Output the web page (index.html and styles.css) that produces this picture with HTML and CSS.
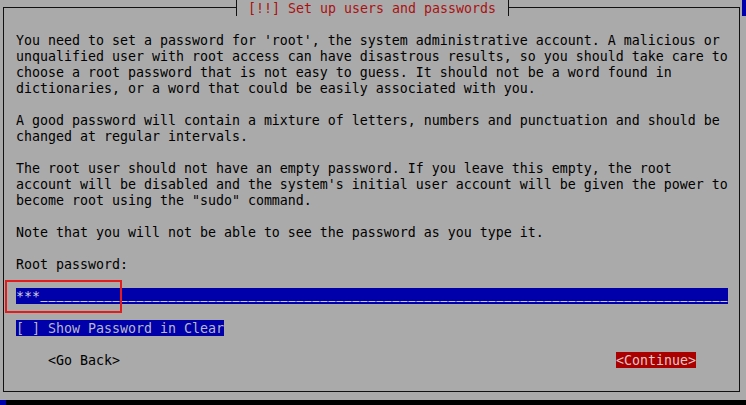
FILE: index.html
```html
<!DOCTYPE html>
<html>
<head>
<meta charset="utf-8">
<link rel="stylesheet" href="styles.css">
</head>
<body>
<div class="screen">
  <div class="main">
    <div class="dialog">
      <div class="title"><span class="title-text">[!!] Set up users and passwords</span></div>
      <div class="body">
        <div class="line">You need to set a password for 'root', the system administrative account. A malicious or</div>
        <div class="line">unqualified user with root access can have disastrous results, so you should take care to</div>
        <div class="line">choose a root password that is not easy to guess. It should not be a word found in</div>
        <div class="line">dictionaries, or a word that could be easily associated with you.</div>
        <div class="line"> </div>
        <div class="line">A good password will contain a mixture of letters, numbers and punctuation and should be</div>
        <div class="line">changed at regular intervals.</div>
        <div class="line"> </div>
        <div class="line">The root user should not have an empty password. If you leave this empty, the root</div>
        <div class="line">account will be disabled and the system's initial user account will be given the power to</div>
        <div class="line">become root using the "sudo" command.</div>
        <div class="line"> </div>
        <div class="line">Note that you will not be able to see the password as you type it.</div>
        <div class="line"> </div>
        <div class="line">Root password:</div>
        <div class="line"> </div>
        <div class="field"><span class="stars">***</span><span class="underline">______________________________________________________________________________________</span></div>
        <div class="line"> </div>
        <div class="line"><span class="check">[ ] Show Password in Clear</span></div>
        <div class="line"> </div>
        <div class="buttons">
          <span class="btn">&lt;Go Back&gt;</span>
          <span class="btn active">&lt;Continue&gt;</span>
        </div>
      </div>
      <div class="mark"></div>
    </div>
  </div>
  <div class="edge"><div class="edge-blue"></div></div>
</div>
<div class="bottom"><div class="bottom-blue"></div></div>
</body>
</html>
```

FILE: styles.css
```css
html, body {
  margin: 0;
  padding: 0;
}
body {
  width: 746px;
  height: 405px;
  overflow: hidden;
  background: #000;
  font-family: "DejaVu Sans Mono", "Liberation Mono", monospace;
  font-size: 13.29px;
  line-height: 16px;
  color: #000;
}
.screen {
  display: flex;
  height: 400px;
  background: #aaaaaa;
}
.main {
  width: 742px;
  padding-left: 3px;
  padding-top: 7px;
  box-sizing: border-box;
}
.dialog {
  position: relative;
  width: 737px;
  height: 385px;
  box-sizing: border-box;
  border: 1px solid #111;
  padding: 24px 11px 0 12px;
}
.title {
  position: absolute;
  left: 232px;
  top: -8px;
  width: 273px;
  height: 16px;
  box-sizing: border-box;
  border-left: 1px solid #111;
  border-right: 1px solid #111;
  background: #aaaaaa;
  color: #aa1010;
  padding-left: 11px;
  white-space: pre;
}
.title-text {
  display: inline-block;
  height: 16px;
  line-height: 18px;
  vertical-align: top;
}
.body {
  width: 712px;
}
.line {
  height: 16px;
  line-height: 18px;
  white-space: pre;
}
.field {
  display: flex;
  align-items: flex-start;
  height: 16px;
  background: #0000aa;
  color: #d0d0e0;
  white-space: pre;
}
.stars {
  height: 16px;
  line-height: 18px;
}
.underline {
  flex: none;
  width: 688px;
  height: 16px;
  line-height: 12px;
  color: #c8c8d8;
  background: repeating-linear-gradient(90deg, transparent 0 1px, #c8c8d8 1px 7px, transparent 7px 8px) 0 13px / 100% 1px no-repeat;
}
.check {
  display: inline-block;
  height: 16px;
  line-height: 18px;
  vertical-align: top;
  background: #0000aa;
  color: #b8b8c8;
}
.buttons {
  display: flex;
  justify-content: space-between;
  height: 16px;
  padding: 0 32px 0 32px;
  white-space: pre;
}
.btn {
  display: inline-block;
  height: 16px;
  line-height: 18px;
}
.btn.active {
  background: #aa0000;
  color: #e0c8c8;
}
.mark {
  position: absolute;
  left: 1px;
  top: 272px;
  width: 117px;
  height: 33px;
  box-sizing: border-box;
  border: 2px solid #e41c1c;
}
.edge {
  width: 4px;
}
.edge-blue {
  height: 16px;
  background: #0000aa;
}
.bottom {
  height: 5px;
  background: #000;
}
.bottom-blue {
  width: 6px;
  height: 5px;
  background: #0000aa;
}
```
